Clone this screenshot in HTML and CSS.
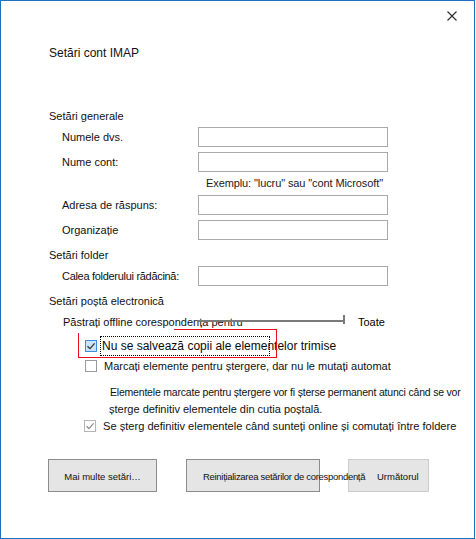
FILE: index.html
```html
<!DOCTYPE html>
<html lang="ro">
<head>
<meta charset="utf-8">
<title>Setări cont IMAP</title>
<link rel="stylesheet" href="styles.css">
</head>
<body>
<div class="window">
  <div class="titlebar">
    <svg class="close" width="10" height="10" viewBox="0 0 10 10"><path d="M0.5 0.5 L9.5 9.5 M9.5 0.5 L0.5 9.5" stroke="#2b2b2b" stroke-width="1.1" fill="none"/></svg>
  </div>
  <div class="title">Setări cont IMAP</div>

  <div class="section s-general">Setări generale</div>
  <div class="field r1"><span class="label">Numele dvs.</span><span class="input"></span></div>
  <div class="field r2"><span class="label">Nume cont:</span><span class="input"></span></div>
  <div class="hint">Exemplu: "lucru" sau "cont Microsoft"</div>
  <div class="field r3"><span class="label">Adresa de răspuns:</span><span class="input"></span></div>
  <div class="field r4"><span class="label">Organizație</span><span class="input"></span></div>

  <div class="section s-folder">Setări folder</div>
  <div class="field r5"><span class="label label-tight">Calea folderului rădăcină:</span><span class="input"></span></div>

  <div class="section s-mail">Setări poștă electronică</div>
  <div class="slider-row">
    <span class="label">Păstrați offline corespondența pentru</span>
    <span class="slider"><span class="track"></span><span class="tick"></span></span>
    <span class="slider-value">Toate</span>
  </div>

  <div class="check-row cb1">
    <span class="box checked"><svg width="10" height="10" viewBox="0 0 10 10"><path d="M1.5 5.2 L4 7.6 L8.6 2.4" stroke="#333" stroke-width="1.3" fill="none"/></svg></span>
    <span class="focus-text">Nu se salvează copii ale elementelor trimise</span>
    <span class="highlight"></span>
  </div>
  <div class="check-row cb2">
    <span class="box"></span>
    <span class="text">Marcați elemente pentru ștergere, dar nu le mutați automat</span>
  </div>
  <div class="note">
    <div class="note-l1">Elementele marcate pentru ștergere vor fi șterse permanent atunci când se vor</div>
    <div class="note-l2">șterge definitiv elementele din cutia poștală.</div>
  </div>
  <div class="check-row cb3">
    <span class="box disabled"><svg width="10" height="10" viewBox="0 0 10 10"><path d="M1.5 5.2 L4 7.6 L8.6 2.4" stroke="#8c8c8c" stroke-width="1.2" fill="none"/></svg></span>
    <span class="text">Se șterg definitiv elementele când sunteți online și comutați între foldere</span>
  </div>

  <div class="buttons">
    <div class="btn btn-more">Mai multe setări…</div>
    <div class="btn btn-reset">Reinițializarea setărilor de corespondență</div>
    <div class="btn btn-next">Următorul</div>
  </div>
</div>
</body>
</html>
```

FILE: styles.css
```css
html, body {
  margin: 0;
  padding: 0;
  background: #ffffff;
}
body {
  font-family: "Liberation Sans", Arial, sans-serif;
  color: #000;
  font-size: 11px;
}
.window {
  box-sizing: border-box;
  width: 475px;
  height: 539px;
  border: 1px solid #1a72c0;
  background: #fff;
  position: relative;
}
.titlebar {
  height: 31px;
  box-sizing: border-box;
  padding: 10px 17px 0 0;
  display: flex;
  justify-content: flex-end;
  align-items: flex-start;
}
.close { display: block; }
.title {
  margin: 11px 0 0 48px;
  font-size: 12px;
  line-height: 20px;
  color: #111;
}
.section {
  margin-left: 48px;
  font-size: 11px;
  line-height: 16px;
  color: #111;
}
.s-general { margin-top: 45px; }
.s-folder { margin-top: 7px; }
.s-mail { margin-top: 7px; }

.field {
  display: grid;
  grid-template-columns: 136px 190px;
  align-items: center;
  margin-left: 61px;
  height: 20px;
}
.r1 { margin-top: 3px; }
.r2 { margin-top: 5px; }
.r3 { margin-top: 5px; }
.r4 { margin-top: 5px; }
.r5 { margin-top: 3px; }
.label {
  white-space: nowrap;
  line-height: 16px;
  color: #111;
}
.label-tight { letter-spacing: -0.3px; }
.input {
  box-sizing: border-box;
  height: 20px;
  border: 1px solid #a9a9a9;
  background: #fff;
}
.hint {
  margin: 4px 0 0 205px;
  line-height: 14px;
  color: #1a1a1a;
  letter-spacing: -0.1px;
}

.slider-row {
  margin: 5px 0 0 62px;
  display: grid;
  grid-template-columns: 134px 150px auto;
  align-items: center;
  height: 16px;
}
.slider {
  position: relative;
  height: 16px;
  display: flex;
  align-items: center;
}
.track {
  display: block;
  width: 148px;
  height: 2px;
  background: #7a7a7a;
  margin-top: -3px;
}
.tick {
  position: absolute;
  left: 146px;
  top: 1px;
  width: 2px;
  height: 9px;
  background: #7a7a7a;
}
.slider-value {
  margin-left: 11px;
  line-height: 16px;
}

.check-row {
  display: flex;
  align-items: center;
  position: relative;
}
.box {
  box-sizing: border-box;
  width: 12px;
  height: 12px;
  border: 1px solid #9a9a9a;
  background: #fff;
  display: flex;
  align-items: center;
  justify-content: center;
  flex: none;
}
.box.checked {
  border-color: #3d8ee0;
  background: #cce4f7;
}
.box.disabled {
  border-color: #b5b5b5;
}
.cb1 {
  margin: 6px 0 0 84px;
  height: 20px;
}
.focus-text {
  box-sizing: border-box;
  margin-left: 3px;
  width: 170px;
  height: 20px;
  border: 1px dotted #000;
  padding-left: 1px;
  font-size: 12px;
  line-height: 18px;
  white-space: nowrap;
  overflow: visible;
  color: #0a0a0a;
}
.highlight {
  position: absolute;
  left: -7px;
  top: -7px;
  width: 199px;
  height: 29px;
  box-sizing: border-box;
  border: 1px solid #e81123;
  pointer-events: none;
}
.highlight::before {
  content: "";
  position: absolute;
  left: -1px;
  top: -1px;
  width: 96px;
  height: 4px;
  background: #fff;
}
.cb2 {
  margin: 2px 0 0 84px;
  height: 16px;
}
.cb2 .text { margin-left: 7px; }
.text {
  white-space: nowrap;
  line-height: 16px;
  font-size: 11px;
  color: #111;
}
.note {
  margin: 10px 0 0 108px;
  font-size: 10.5px;
  line-height: 17px;
  color: #111;
  white-space: nowrap;
}
.note-l1 { margin-left: 1px; letter-spacing: -0.2px; }
.note-l2 { font-size: 11px; }
.cb3 {
  margin: 0 0 0 83px;
  height: 16px;
}
.cb3 .text { margin-left: 7px; font-size: 11.1px; }

.buttons {
  display: flex;
  margin: 25px 0 0 47px;
}
.btn {
  box-sizing: border-box;
  height: 33px;
  border: 1px solid #8c8c8c;
  background: #e5e5e5;
  display: flex;
  align-items: center;
  white-space: nowrap;
  font-size: 9.5px;
  padding-top: 2px;
  color: #111;
}
.btn-more {
  width: 109px;
  justify-content: center;
}
.btn-reset {
  width: 134px;
  margin-left: 29px;
  padding-left: 16px;
  letter-spacing: -0.3px;
  position: relative;
  z-index: 1;
}
.btn-next {
  width: 81px;
  margin-left: 28px;
  padding-left: 28px;
  border-color: #cccccc;
}
```
